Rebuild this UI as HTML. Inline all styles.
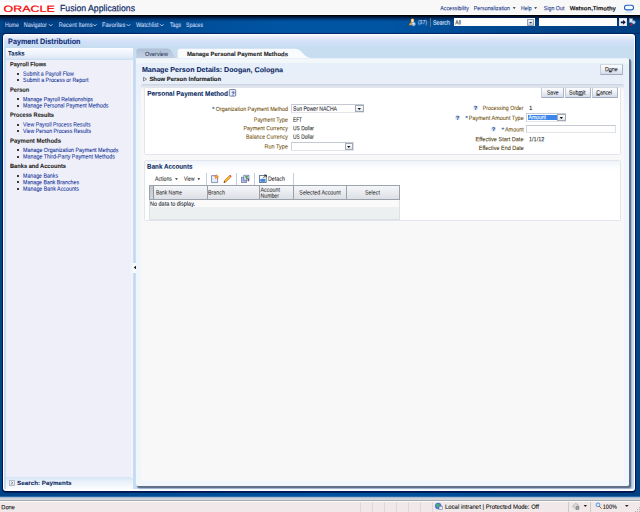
<!DOCTYPE html>
<html lang="en"><head><meta charset="utf-8"><title>Payment Distribution</title>
<style>
html,body{margin:0;padding:0;width:640px;height:512px;overflow:hidden;background:#00478c;}
#root{position:relative;width:640px;height:512px;overflow:hidden;font-family:"Liberation Sans",sans-serif;}
.t{position:absolute;-webkit-text-stroke:0.07px currentColor;transform-origin:0 50%;white-space:pre;line-height:10px;font-family:"Liberation Sans",sans-serif;}
.b{position:absolute;box-sizing:border-box;}
svg{position:absolute;overflow:visible;}
.btn{background:linear-gradient(#fbfcfe 0,#eef1f7 45%,#d5dce9 100%);border:1px solid;border-color:#d3dae5 #a9b4c6 #9eabc0 #c3ccd9;border-radius:1px;}
.t u{text-decoration-thickness:0.45px;text-underline-offset:0.2px;}
.inp{background:#fff;border:1px solid;border-color:#c4c9d2 #dcdfe5 #e2e5ea #cfd3db;}
.dd{background:linear-gradient(#fdfdfe,#e2e5eb);border:1px solid #a3a9b4;}
.vs{width:1px;background:#9aa0a8;}
.ts{width:1px;background:#c3cede;}
.bul{position:absolute;width:2px;height:2px;border-radius:0.7px;background:#1a1a1a;}

</style></head>
<body>
<div id="root">
<!-- header -->
<div class="b" style="left:0;top:0;width:640px;height:15px;background:linear-gradient(#f8f8f8 0,#f8f8f8 13.5px,#fff 14px)"></div>
<div class="b" style="left:0;top:2px;width:58px;height:13px;background:#fff"></div>
<!-- page bg -->
<div class="b" style="left:0;top:33px;width:640px;height:479px;background:linear-gradient(to right,#004488 0,#004a92 18%,#00509b 35%,#00539f 50%,#00509b 65%,#004a91 82%,#004284 100%)"></div>
<!-- nav bar -->
<div class="b" style="left:0;top:15px;width:640px;height:18.7px;background:linear-gradient(to right,#00468b 0,#00468b 2.4px,#003d80 3px,#00458b 16%,#004f9b 32%,#0055a3 45%,#0055a3 60%,#004a93 74%,#004185 90%,#003f82 636.5px,#00336f 637px,#003f84 638px,#003f84 100%)"></div>
<div class="b" style="left:0;top:15px;width:640px;height:18.7px;background:linear-gradient(rgba(0,0,0,1) 0,rgba(0,0,0,1) 1px,rgba(0,6,30,.8) 1.6px,rgba(0,10,40,.62) 3px,rgba(0,10,40,.3) 4.5px,rgba(0,10,40,.08) 6px,rgba(0,10,40,0) 7px,rgba(0,10,40,0) 17.3px,rgba(0,10,80,.4) 18.7px)"></div>
<!-- nav search -->
<div class="b" style="left:430px;top:18px;width:1px;height:9px;background:#5f6f8c"></div>
<div class="b" style="left:453.7px;top:18.4px;width:81px;height:7.9px;background:#fdfdfd"></div>
<div class="b" style="left:527.2px;top:18.9px;width:6.9px;height:7px;background:linear-gradient(#f4f6fa,#b9c4d6);border:1px solid #98a4b8"></div>
<div class="b" style="left:538.5px;top:18.4px;width:78.4px;height:7.9px;background:#fdfdfd"></div>
<div class="b" style="left:618.6px;top:18.2px;width:8.5px;height:8.1px;background:#f6f7fb;border:1px solid #dfe3ec"></div>
<!-- main panel -->
<div class="b" style="left:3px;top:33.75px;width:632px;height:457.6px;border-radius:3px;border:1px solid #fff;border-top-width:1.5px;border-bottom-width:2px;box-shadow:0 0.6px 0 1px rgba(0,18,76,.85),0 1.6px 0.5px 0.4px rgba(0,18,76,.6);background:linear-gradient(#f4f5fb 0,#e6ecf9 2.5px,#d8e5f8 5px,#cfdff7 7px,#cddff5 10px,#c6def0 12px,#c6def0 17.5px,#c9d9f0 18.3px,#c6def0 19.2px,#c6def0 24px,#c7dcf1 40px,#c8dcf2 100%)"></div>
<!-- tasks panel -->
<div class="b" style="left:5.6px;top:47.5px;width:127.6px;height:441px;background:#eeeff9"></div>
<div class="b" style="left:5.6px;top:47.5px;width:127.6px;height:12.2px;background:linear-gradient(#fafcff 0,#eef3fb 50%,#dde8f6 85%,#c9daf0 100%)"></div>
<div class="b" style="left:5.6px;top:477px;width:127.6px;height:11.5px;background:linear-gradient(#d5e4f5 0,#e9f0fa 35%,#fafcfe 100%)"></div>
<div class="b" style="left:9.4px;top:480px;width:5.3px;height:5.5px;background:linear-gradient(#fff,#d4dbe6);border:1px solid #b4bdcc"></div>
<!-- splitter -->
<div class="b" style="left:131px;top:59.5px;width:6px;height:418px;background:linear-gradient(to right,#eef1fa 0,#f1f5fb 0.6px,#f1f5fb 2px,#c3d6f1 2.6px,#c5d9f3 4px,#d3e2f7 5.2px,#dde9f9 6px)"></div>
<div class="b" style="left:133.4px;top:262.5px;width:3.4px;height:10px;background:#fbfbfd;border-right:1px solid #a9adb5"></div>
<!-- tab bar -->
<svg width="640" height="512" viewBox="0 0 640 512" style="left:0;top:0">
 <defs><linearGradient id="tg" x1="0" y1="0" x2="0" y2="1"><stop offset="0" stop-color="#aebfd6"/><stop offset="1" stop-color="#c5d2e4"/></linearGradient></defs>
 <path d="M136.300 58.600V51q0-2.600 2.600-2.600H167.500c5 0 5.500 9.800 10.500 9.800v.4z" fill="url(#tg)"/>
 <path d="M177.600 58.600V51.200q0-2.500 2.500-2.500H295.500c6.500 0 8.500 9.400 16 9.400v.5z" fill="#f9fbfd"/>
</svg>
<!-- content -->
<div class="b" style="left:136.3px;top:57.6px;width:492.5px;height:428px;box-shadow:1.3px 1.3px 0.7px rgba(92,106,132,.95),2.4px 2.4px 1.2px rgba(120,136,165,.45);background:linear-gradient(#e6ebfb 0,#f0f5fb 1.2px,#f2f8fa 5px,#e8f0fa 6px,#eaf1fb 30px,#f0f5fc 60px,#f1f6fc 100%);border-radius:0 2px 2px 2px"></div>
<div class="b" style="left:140.8px;top:59px;width:483.6px;height:422px;background:linear-gradient(#f2f8fa 0,#f2f8fa 3.5px,#e6f0fa 4.5px,#e7effa 8px,#e8eff9 24.5px,#f4f6fa 26px,#f8f8f8 32px,#f8f8f8 100%)"></div>
<!-- PPM box -->
<div class="b" style="left:141.2px;top:84px;width:482.6px;height:73px;background:linear-gradient(#c6d1e6 0,#d3dbe8 1px,#e2e6ec 2.5px,#f2f3f5 4.5px,#f8f8f8 7px);border-radius:2px 2px 0 0"></div>
<div class="b" style="left:144.4px;top:87px;width:476.2px;height:67.6px;background:#fff;border:1px solid #e1e6ee;border-radius:1.5px"></div>
<!-- Bank box -->
<div class="b" style="left:144.4px;top:160.2px;width:476.2px;height:61.2px;background:#fff;border:1px solid #e1e6ee;border-radius:1.5px"></div>
<div class="b" style="left:145.4px;top:161px;width:474.2px;height:9px;background:linear-gradient(#f0f4fa,#fff)"></div>
<!-- buttons -->
<div class="b btn" style="left:600px;top:64px;width:23px;height:10.5px"></div>
<div class="b btn" style="left:541px;top:87px;width:22.5px;height:10.5px"></div>
<div class="b btn" style="left:565px;top:87px;width:25.5px;height:10.5px"></div>
<div class="b btn" style="left:592px;top:87px;width:26px;height:10.5px"></div>
<!-- selects / inputs -->
<div class="b inp" style="left:291px;top:104px;width:73px;height:8.5px"></div>
<div class="b dd" style="left:355px;top:105px;width:8.5px;height:7px"></div>
<div class="b inp" style="left:291px;top:142px;width:62.5px;height:8.5px"></div>
<div class="b dd" style="left:344.5px;top:143px;width:8.5px;height:7px"></div>
<div class="b inp" style="left:526px;top:113px;width:40px;height:8.5px"></div>
<div class="b" style="left:527.5px;top:114.5px;width:30px;height:5.5px;background:#3a86ea"></div>
<div class="b dd" style="left:557px;top:114px;width:8.5px;height:7px"></div>
<div class="b inp" style="left:526px;top:124.5px;width:89.5px;height:8.5px"></div>
<!-- table -->
<div class="b" style="left:149.4px;top:184.6px;width:250.4px;height:35.6px;background:#ecf0f0;border:1px solid #dde1e5"></div>
<div class="b" style="left:149.4px;top:184.6px;width:250.4px;height:15px;background:linear-gradient(#f5f6f9,#e8eaef 55%,#dcdfe5);border:1px solid #9da3ab"></div>
<div class="b" style="left:150px;top:199.6px;width:249px;height:7.5px;background:#fafafa"></div>
<div class="b" style="left:150.2px;top:185.6px;width:4.3px;height:13px;background:linear-gradient(#c3c7ce,#d3d6dc);border-right:1px solid #8f959e"></div>
<div class="b vs" style="left:207px;top:186px;height:13px"></div>
<div class="b vs" style="left:259px;top:186px;height:13px"></div>
<div class="b vs" style="left:293px;top:186px;height:13px"></div>
<div class="b vs" style="left:346px;top:186px;height:13px"></div>
<!-- toolbar separators -->
<div class="b ts" style="left:206px;top:173px;height:11.5px"></div>
<div class="b ts" style="left:236px;top:173px;height:11.5px"></div>
<div class="b ts" style="left:254px;top:173px;height:11.5px"></div>
<div class="b ts" style="left:293px;top:173px;height:11.5px"></div>
<!-- status bar -->
<div class="b" style="left:0;top:496px;width:640px;height:16px;background:linear-gradient(#00509a 0,#2f6fae 0.6px,#9fb6d0 1.2px,#b4c4d6 2px,#d0d4d9 2.4px,#d2d5da 4px,#a9a9b0 4.3px,#a9a9b0 5px,#fbfbfb 5.3px,#fbfbfb 6px,#f1e9e9 6.5px,#f1e9e9 100%)"></div>
<div class="b" style="left:567.5px;top:502px;width:1px;height:10px;background:#d0c8c8"></div>
<div class="b" style="left:589.6px;top:502px;width:1px;height:10px;background:#d0c8c8"></div>
<!-- ICONS -->
<svg width="640" height="512" viewBox="0 0 640 512" style="left:0;top:0;pointer-events:none">
 <!-- nav chevrons -->
 <g fill="none" stroke="#c4d9f4" stroke-width="0.9" stroke-linecap="round" stroke-linejoin="round">
  <path d="M49.2 24.5l1.5 1.5 1.5-1.5"/>
  <path d="M93.3 24.5l1.5 1.5 1.5-1.5"/>
  <path d="M127 24.5l1.5 1.5 1.5-1.5"/>
  <path d="M160.300 24.500l1.500 1.500 1.500-1.500"/>
 </g>
 <!-- header dropdown triangles -->
 <g fill="#222a44">
  <path d="M512.7 7.3h3l-1.5 1.8z"/>
  <path d="M534.1 7.3h3l-1.5 1.8z"/>
 </g>
 <!-- header logo icon -->
 <rect x="624.500" y="5.300" width="9" height="4.600" rx="2.200" ry="2.200" fill="#fff" stroke="#1b5fbf" stroke-width="1.100"/>
 <path d="M625.600 12.300q3.400-.9 6.800 0" fill="none" stroke="#a9c8ee" stroke-width="0.700"/>
 <!-- user icon -->
 <g>
  <path d="M408.9 25.2q.6-2.6 2.2-2.9l-.4-2.3q.5-1.5 2-1.4 1.400.1 1.500 1.600l-.4 2.100q1 .3 1.400 2.900z" fill="#f59a1b"/>
  <path d="M411.300 19.800q1-1 2.200-.3l-.3 2.500-1.300.2z" fill="#fff3da"/>
  <circle cx="413.600" cy="24" r="1.900" fill="#9cc3f0" stroke="#5f8fd0" stroke-width="0.5"/>
  <circle cx="413.300" cy="23.600" r="0.800" fill="#e8f3ff"/>
 </g>
 <!-- nav select arrow -->
 <path d="M529.300 21.900h2.800l-1.400 1.700z" fill="#1a2a4a"/>
 <!-- go arrow -->
 <path d="M620.800 21.400h2.300v-1.600l2.700 2.500-2.700 2.500v-1.600h-2.300z" fill="#0a1a3a"/>
 <!-- search-option icon -->
 <g>
  <rect x="629.300" y="18.600" width="3.300" height="3.800" fill="#e4e8f4" stroke="#8c94b4" stroke-width="0.5"/>
  <circle cx="633.500" cy="22.300" r="1.700" fill="#bfe3fb" stroke="#6ea6d8" stroke-width="0.6"/>
  <path d="M632.200 23.600l-1.800 1.700" stroke="#e01818" stroke-width="1.100" stroke-linecap="round"/>
 </g>
 <!-- disclosure triangle -->
 <path d="M143.500 77.300l3 1.800-3 1.800z" fill="#fafafa" stroke="#333" stroke-width="0.55" stroke-linejoin="round"/>
 <!-- help box icon -->
 <rect x="229.300" y="89.600" width="6.400" height="6.500" rx="0.800" fill="#eef3fb" stroke="#4a5f94" stroke-width="0.8"/>
 <!-- help circles -->
 <g fill="#d9e4f6">
  <circle cx="475.600" cy="107.700" r="2.500"/>
  <circle cx="457.500" cy="117.600" r="2.500"/>
  <circle cx="493.400" cy="128.900" r="2.500"/>
 </g>
 <!-- select arrows -->
 <g fill="#111">
  <path d="M357.600 108h3.400l-1.700 2z"/>
  <path d="M347.100 146h3.400l-1.700 2z"/>
  <path d="M559.600 117h3.400l-1.700 2z"/>
 </g>
 <!-- Actions/View arrows -->
 <g fill="#222">
  <path d="M175 178.300h2.800l-1.400 1.700z"/>
  <path d="M197.400 178.300h2.800l-1.400 1.700z"/>
 </g>
 <!-- toolbar icon: new -->
 <g>
  <path d="M211.500 175.600h4.300l1.800 1.800v5.200h-6.100z" fill="#e6eaf7" stroke="#5f6fa2" stroke-width="0.7"/>
  <path d="M216.600 174.600l.6 1.300 1.400.2-1 1 .2 1.400-1.200-.7-1.200.7.200-1.400-1-1 1.400-.2z" fill="#f8b01c" stroke="#d9541a" stroke-width="0.45"/>
 </g>
 <!-- pencil -->
 <g>
  <path d="M224.200 182.300l.5-2 4.700-4.700 1.500 1.500-4.700 4.700z" fill="#f6b22c" stroke="#b36a12" stroke-width="0.5"/>
  <path d="M229.400 175.600l.8-.8 1.500 1.500-.8.800z" fill="#d8433a"/>
  <path d="M223.600 182.900l.6-2 1.400 1.400z" fill="#5a3a1a"/>
 </g>
 <!-- export -->
 <g>
  <rect x="241.500" y="177.200" width="5.200" height="5.400" fill="#aab6de" stroke="#5a68a0" stroke-width="0.6"/>
  <rect x="243.800" y="175.200" width="5.200" height="5" fill="#d3daf0" stroke="#5a68a0" stroke-width="0.6"/>
  <path d="M244.800 176.200h3.600l-1.800 2.400z" fill="#2fa23a"/>
  <path d="M246 178.800h2.600v2.600" fill="none" stroke="#333" stroke-width="0.7"/>
 </g>
 <!-- detach -->
 <g>
  <rect x="259.400" y="175.600" width="6.800" height="6.800" fill="#f4f7fc" stroke="#4a5f8a" stroke-width="0.8"/>
  <rect x="260.300" y="179" width="5" height="2.800" fill="#3a84dc"/>
  <path d="M263 178.300l3.300-3.300m-2.200 0h2.200v2.200" fill="none" stroke="#222" stroke-width="0.8"/>
 </g>
 <!-- splitter arrow -->
 <path d="M136 265.700v3.600l-2.300-1.800z" fill="#111"/>
 <!-- search payments chevron -->
 <path d="M11.300 481.700l1.500 1.100-1.500 1.100" fill="none" stroke="#333" stroke-width="0.6"/>
 <!-- status: globe -->
 <g>
  <circle cx="438.200" cy="506" r="3" fill="#3f86d8" stroke="#2a5ca8" stroke-width="0.5"/>
  <path d="M436.200 504.600q1.500-1.200 3 .1l-.6 1.800-1.800.3z" fill="#58b848"/>
  <rect x="439" y="506.300" width="3.400" height="3" fill="#e8ecf4" stroke="#5a6a8a" stroke-width="0.5"/>
 </g>
 <!-- status: shield/lock icon -->
 <g>
  <path d="M572.600 506l3-2.600 2.400 1.200.6 3.400-2.600 1.600z" fill="#dcdcdc" stroke="#8a8a8a" stroke-width="0.5"/>
  <rect x="576" y="506.300" width="3" height="3.200" fill="#9aa0a8" stroke="#6a6a6a" stroke-width="0.4"/>
 </g>
 <path d="M583.600 505h3.400l-1.700 2z" fill="#222"/>
 <!-- zoom icon -->
 <g>
  <circle cx="598" cy="504.800" r="1.900" fill="#d7ecff" stroke="#3f7fd8" stroke-width="0.8"/>
  <path d="M599.400 506.300l2 2.200" stroke="#a0682a" stroke-width="1" stroke-linecap="round"/>
 </g>
 <path d="M625 505h3.600l-1.800 2z" fill="#222"/>
 <g fill="#b8b0b0"><rect x="637" y="509" width="1" height="1"/><rect x="635" y="511" width="1" height="1"/><rect x="637" y="511" width="1" height="1"/><rect x="639" y="507" width="1" height="1"/><rect x="639" y="509" width="1" height="1"/><rect x="639" y="511" width="1" height="1"/></g>
</svg>

<!-- bullets -->
<div class="bul" style="left:17px;top:73px"></div>
<div class="bul" style="left:17px;top:79px"></div>
<div class="bul" style="left:17px;top:98px"></div>
<div class="bul" style="left:17px;top:105px"></div>
<div class="bul" style="left:17px;top:124px"></div>
<div class="bul" style="left:17px;top:130px"></div>
<div class="bul" style="left:17px;top:149px"></div>
<div class="bul" style="left:17px;top:156px"></div>
<div class="bul" style="left:17px;top:175px"></div>
<div class="bul" style="left:17px;top:181px"></div>
<div class="bul" style="left:17px;top:188px"></div>
<!-- status dividers -->
<div class="b" style="left:360px;top:502px;width:1px;height:10px;background:#e0d8d8"></div>
<div class="b" style="left:372px;top:502px;width:1px;height:10px;background:#e0d8d8"></div>
<div class="b" style="left:384px;top:502px;width:1px;height:10px;background:#e0d8d8"></div>
<div class="b" style="left:396px;top:502px;width:1px;height:10px;background:#e0d8d8"></div>
<div class="b" style="left:408px;top:502px;width:1px;height:10px;background:#e0d8d8"></div>
<div class="b" style="left:420px;top:502px;width:1px;height:10px;background:#e0d8d8"></div>
<div class="b" style="left:432px;top:502px;width:1px;height:10px;background:#e0d8d8"></div>

<span class="t" style="left:3px;top:3px;font-size:8.8px;color:#f80000;transform:matrix(1.4149,0.0008,0,1,0.50,0.75);-webkit-text-stroke:0.2px #f80000;">ORACLE</span>
<span class="t" style="left:60px;top:3px;font-size:9.2px;color:#0c2868;transform:matrix(0.9473,0.0008,0,1,0.00,0.15);-webkit-text-stroke:0.18px #0c2868;">Fusion Applications</span>
<span class="t" style="left:440px;top:3px;font-size:6.1px;color:#0d2c86;transform:matrix(0.8588,0.0008,0,1,0.30,0.20);">Accessibility</span>
<span class="t" style="left:473px;top:3px;font-size:6.1px;color:#0d2c86;transform:matrix(0.8687,0.0008,0,1,0.80,0.20);">Personalization</span>
<span class="t" style="left:521px;top:3px;font-size:6.1px;color:#0d2c86;transform:matrix(0.8369,0.0008,0,1,0.00,0.20);">Help</span>
<span class="t" style="left:543px;top:3px;font-size:6.1px;color:#0d2c86;transform:matrix(0.8685,0.0008,0,1,0.80,0.20);">Sign Out</span>
<span class="t" style="left:569px;top:3px;font-size:6.0px;font-weight:700;color:#111;transform:matrix(0.9947,0.0008,0,1,0.80,0.35);">Watson,Timothy</span>
<span class="t" style="left:5px;top:20px;font-size:6.4px;color:#cbdcf5;transform:matrix(0.8088,0.0008,0,1,0.00,0.05);">Home</span>
<span class="t" style="left:23px;top:20px;font-size:6.4px;color:#cbdcf5;transform:matrix(0.8443,0.0008,0,1,0.80,0.05);">Navigator</span>
<span class="t" style="left:58px;top:20px;font-size:6.4px;color:#cbdcf5;transform:matrix(0.8949,0.0008,0,1,0.80,0.05);">Recent Items</span>
<span class="t" style="left:101px;top:20px;font-size:6.4px;color:#cbdcf5;transform:matrix(0.8904,0.0008,0,1,0.90,0.05);">Favorites</span>
<span class="t" style="left:136px;top:20px;font-size:6.4px;color:#cbdcf5;transform:matrix(0.8798,0.0008,0,1,0.00,0.05);">Watchlist</span>
<span class="t" style="left:170px;top:20px;font-size:6.4px;color:#cbdcf5;transform:matrix(0.8148,0.0008,0,1,0.00,0.05);">Tags</span>
<span class="t" style="left:186px;top:20px;font-size:6.4px;color:#cbdcf5;transform:matrix(0.7971,0.0008,0,1,0.00,0.05);">Spaces</span>
<span class="t" style="left:417px;top:17px;font-size:6.1px;color:#cbdcf5;transform:matrix(0.8484,0.0008,0,1,0.90,0.35);">(37)</span>
<span class="t" style="left:432px;top:17px;font-size:6.4px;color:#e4eefb;transform:matrix(0.8444,0.0008,0,1,0.90,0.85);">Search</span>
<span class="t" style="left:455px;top:17px;font-size:6.1px;color:#222;transform:matrix(0.8258,0.0008,0,1,0.30,0.55);">All</span>
<span class="t" style="left:8px;top:36px;font-size:7.9px;font-weight:700;color:#0a2c78;transform:matrix(0.9123,0.0008,0,1,0.10,0.95);">Payment Distribution</span>
<span class="t" style="left:8px;top:48px;font-size:6.4px;font-weight:700;color:#0b2a5e;transform:matrix(0.9345,0.0008,0,1,0.10,0.55);">Tasks</span>
<span class="t" style="left:10px;top:59px;font-size:6.1px;font-weight:700;color:#1d1a16;transform:matrix(0.9212,0.0008,0,1,0.00,0.15);">Payroll Flows</span>
<span class="t" style="left:23px;top:68px;font-size:6.1px;color:#0e3096;transform:matrix(0.8602,0.0008,0,1,0.10,0.75);">Submit a Payroll Flow</span>
<span class="t" style="left:23px;top:75px;font-size:6.1px;color:#0e3096;transform:matrix(0.8736,0.0008,0,1,0.10,0.05);">Submit a Process or Report</span>
<span class="t" style="left:10px;top:84px;font-size:6.1px;font-weight:700;color:#1d1a16;transform:matrix(0.9336,0.0008,0,1,0.00,0.75);">Person</span>
<span class="t" style="left:23px;top:94px;font-size:6.1px;color:#0e3096;transform:matrix(0.8670,0.0008,0,1,0.10,0.15);">Manage Payroll Relationships</span>
<span class="t" style="left:23px;top:100px;font-size:6.1px;color:#0e3096;transform:matrix(0.8663,0.0008,0,1,0.10,0.45);">Manage Personal Payment Methods</span>
<span class="t" style="left:10px;top:109px;font-size:6.1px;font-weight:700;color:#1d1a16;transform:matrix(0.9278,0.0008,0,1,0.00,0.85);">Process Results</span>
<span class="t" style="left:23px;top:119px;font-size:6.1px;color:#0e3096;transform:matrix(0.8516,0.0008,0,1,0.10,0.55);">View Payroll Process Results</span>
<span class="t" style="left:23px;top:125px;font-size:6.1px;color:#0e3096;transform:matrix(0.8506,0.0008,0,1,0.10,0.95);">View Person Process Results</span>
<span class="t" style="left:10px;top:135px;font-size:6.1px;font-weight:700;color:#1d1a16;transform:matrix(0.9778,0.0008,0,1,0.00,0.65);">Payment Methods</span>
<span class="t" style="left:23px;top:145px;font-size:6.1px;color:#0e3096;transform:matrix(0.8746,0.0008,0,1,0.10,0.05);">Manage Organization Payment Methods</span>
<span class="t" style="left:23px;top:151px;font-size:6.1px;color:#0e3096;transform:matrix(0.8790,0.0008,0,1,0.10,0.45);">Manage Third-Party Payment Methods</span>
<span class="t" style="left:10px;top:160px;font-size:6.1px;font-weight:700;color:#1d1a16;transform:matrix(0.9324,0.0008,0,1,0.00,0.95);">Banks and Accounts</span>
<span class="t" style="left:23px;top:170px;font-size:6.1px;color:#0e3096;transform:matrix(0.8584,0.0008,0,1,0.10,0.75);">Manage Banks</span>
<span class="t" style="left:23px;top:177px;font-size:6.1px;color:#0e3096;transform:matrix(0.8594,0.0008,0,1,0.10,0.15);">Manage Bank Branches</span>
<span class="t" style="left:23px;top:183px;font-size:6.1px;color:#0e3096;transform:matrix(0.8730,0.0008,0,1,0.10,0.65);">Manage Bank Accounts</span>
<span class="t" style="left:17px;top:478px;font-size:6.0px;font-weight:700;color:#0b2a5e;transform:matrix(1.0455,0.0008,0,1,0.10,0.05);">Search: Payments</span>
<span class="t" style="left:145px;top:49px;font-size:6.1px;color:#2c3a58;transform:matrix(0.9014,0.0008,0,1,0.00,0.05);">Overview</span>
<span class="t" style="left:186px;top:49px;font-size:6.1px;font-weight:700;color:#1a1a1a;transform:matrix(0.9724,0.0008,0,1,0.90,0.05);">Manage Personal Payment Methods</span>
<span class="t" style="left:141px;top:65px;font-size:7.2px;font-weight:700;color:#08265f;transform:matrix(0.9896,0.0008,0,1,0.90,0.05);">Manage Person Details: Doogan, Cologna</span>
<span class="t" style="left:149px;top:74px;font-size:6.1px;font-weight:700;color:#111;transform:matrix(0.9700,0.0008,0,1,0.40,0.05);">Show Person Information</span>
<span class="t" style="left:605px;top:64px;font-size:6.1px;color:#111;transform:matrix(0.8780,0.0008,0,1,0.00,0.35);">D<u>o</u>ne</span>
<span class="t" style="left:147px;top:88px;font-size:6.8px;font-weight:700;color:#06285e;transform:matrix(0.9508,0.0008,0,1,0.20,0.85);">Personal Payment Method</span>
<span class="t" style="left:547px;top:87px;font-size:6.1px;color:#111;transform:matrix(0.8279,0.0008,0,1,0.00,0.45);">Save</span>
<span class="t" style="left:569px;top:87px;font-size:6.1px;color:#111;transform:matrix(0.8646,0.0008,0,1,0.00,0.45);">Sub<u>m</u>it</span>
<span class="t" style="left:596px;top:87px;font-size:6.1px;color:#111;transform:matrix(0.8270,0.0008,0,1,0.30,0.45);"><u>C</u>ancel</span>
<span class="t" style="left:212px;top:104px;font-size:6.8px;color:#2a6cb4;transform:matrix(1.0000,0.0008,0,1,0.00,0.55);">*</span>
<span class="t" style="left:215px;top:103px;font-size:6.1px;color:#71500a;transform:matrix(0.8771,0.0008,0,1,0.80,0.90);">Organization Payment Method</span>
<span class="t" style="left:253px;top:114px;font-size:6.1px;color:#71500a;transform:matrix(0.8805,0.0008,0,1,0.80,0.75);">Payment Type</span>
<span class="t" style="left:243px;top:123px;font-size:6.1px;color:#71500a;transform:matrix(0.8817,0.0008,0,1,0.50,0.15);">Payment Currency</span>
<span class="t" style="left:246px;top:131px;font-size:6.1px;color:#71500a;transform:matrix(0.8671,0.0008,0,1,0.00,0.65);">Balance Currency</span>
<span class="t" style="left:264px;top:141px;font-size:6.1px;color:#71500a;transform:matrix(0.9044,0.0008,0,1,0.50,0.40);">Run Type</span>
<span class="t" style="left:293px;top:103px;font-size:6.3px;color:#15151f;transform:matrix(0.8060,0.0008,0,1,0.00,0.65);">Sun Power NACHA</span>
<span class="t" style="left:293px;top:114px;font-size:6.1px;color:#222;transform:matrix(0.7815,0.0008,0,1,0.00,0.75);">EFT</span>
<span class="t" style="left:293px;top:123px;font-size:6.1px;color:#222;transform:matrix(0.8053,0.0008,0,1,0.00,0.15);">US Dollar</span>
<span class="t" style="left:293px;top:131px;font-size:6.1px;color:#222;transform:matrix(0.8053,0.0008,0,1,0.00,0.65);">US Dollar</span>
<span class="t" style="left:482px;top:102px;font-size:6.1px;color:#71500a;transform:matrix(0.8583,0.0008,0,1,0.80,0.90);">Processing Order</span>
<span class="t" style="left:529px;top:102px;font-size:6.1px;color:#222;transform:matrix(1.0000,0.0008,0,1,0.00,0.90);">1</span>
<span class="t" style="left:465px;top:113px;font-size:6.8px;color:#2a6cb4;transform:matrix(1.0000,0.0008,0,1,0.30,0.55);">*</span>
<span class="t" style="left:468px;top:112px;font-size:6.1px;color:#71500a;transform:matrix(0.8970,0.0008,0,1,0.80,0.90);">Payment Amount Type</span>
<span class="t" style="left:528px;top:112px;font-size:6.1px;color:#fff;transform:matrix(0.8327,0.0008,0,1,0.50,0.35);">Amount</span>
<span class="t" style="left:501px;top:125px;font-size:6.8px;color:#2a6cb4;transform:matrix(1.0000,0.0008,0,1,0.60,0.05);">*</span>
<span class="t" style="left:505px;top:124px;font-size:6.1px;color:#71500a;transform:matrix(0.8898,0.0008,0,1,0.00,0.40);">Amount</span>
<span class="t" style="left:475px;top:134px;font-size:6.1px;color:#4a3608;transform:matrix(0.9143,0.0008,0,1,0.60,0.15);">Effective Start Date</span>
<span class="t" style="left:529px;top:134px;font-size:6.1px;color:#222;transform:matrix(0.9084,0.0008,0,1,0.00,0.15);">1/1/12</span>
<span class="t" style="left:478px;top:142px;font-size:6.1px;color:#4a3608;transform:matrix(0.8913,0.0008,0,1,0.80,0.90);">Effective End Date</span>
<span class="t" style="left:147px;top:161px;font-size:6.8px;font-weight:700;color:#06285e;transform:matrix(0.9221,0.0008,0,1,0.10,0.75);">Bank Accounts</span>
<span class="t" style="left:155px;top:173px;font-size:6.1px;color:#222;transform:matrix(0.8457,0.0008,0,1,0.00,0.75);">Actions</span>
<span class="t" style="left:184px;top:173px;font-size:6.1px;color:#222;transform:matrix(0.7933,0.0008,0,1,0.00,0.75);">View</span>
<span class="t" style="left:268px;top:173px;font-size:6.1px;color:#222;transform:matrix(0.8803,0.0008,0,1,0.00,0.75);">Detach</span>
<span class="t" style="left:155px;top:187px;font-size:6.1px;color:#333;transform:matrix(0.8165,0.0008,0,1,0.90,0.55);">Bank Name</span>
<span class="t" style="left:208px;top:187px;font-size:6.1px;color:#333;transform:matrix(0.8803,0.0008,0,1,0.00,0.55);">Branch</span>
<span class="t" style="left:260px;top:184px;font-size:6.1px;color:#333;transform:matrix(0.8851,0.0008,0,1,0.50,0.65);">Account</span>
<span class="t" style="left:260px;top:190px;font-size:6.1px;color:#333;transform:matrix(0.8530,0.0008,0,1,0.50,0.75);">Number</span>
<span class="t" style="left:299px;top:187px;font-size:6.1px;color:#333;transform:matrix(0.8812,0.0008,0,1,0.30,0.55);">Selected Account</span>
<span class="t" style="left:365px;top:187px;font-size:6.1px;color:#333;transform:matrix(0.8856,0.0008,0,1,0.00,0.55);">Select</span>
<span class="t" style="left:150px;top:198px;font-size:6.1px;color:#10182a;transform:matrix(0.8994,0.0008,0,1,0.00,0.75);">No data to display.</span>
<span class="t" style="left:1px;top:502px;font-size:6.2px;color:#000;transform:matrix(0.9259,0.0008,0,1,0.30,0.15);">Done</span>
<span class="t" style="left:445px;top:501px;font-size:6.2px;color:#000;transform:matrix(0.9646,0.0008,0,1,0.00,0.75);">Local intranet | Protected Mode: Off</span>
<span class="t" style="left:602px;top:501px;font-size:6.2px;color:#000;transform:matrix(0.8908,0.0008,0,1,0.80,0.75);">100%</span>
<span class="t" style="left:231px;top:88px;font-size:5.6px;font-weight:700;color:#1d3f86;transform:matrix(1.0000,0.0008,0,1,0.20,0.45);">?</span>
<span class="t" style="left:474px;top:102px;font-size:5.4px;font-weight:700;color:#16357c;transform:matrix(1.0000,0.0008,0,1,0.10,0.85);">?</span>
<span class="t" style="left:456px;top:112px;font-size:5.4px;font-weight:700;color:#16357c;transform:matrix(1.0000,0.0008,0,1,0.00,0.75);">?</span>
<span class="t" style="left:491px;top:124px;font-size:5.4px;font-weight:700;color:#16357c;transform:matrix(1.0000,0.0008,0,1,0.90,0.05);">?</span>
</div>
</body></html>
